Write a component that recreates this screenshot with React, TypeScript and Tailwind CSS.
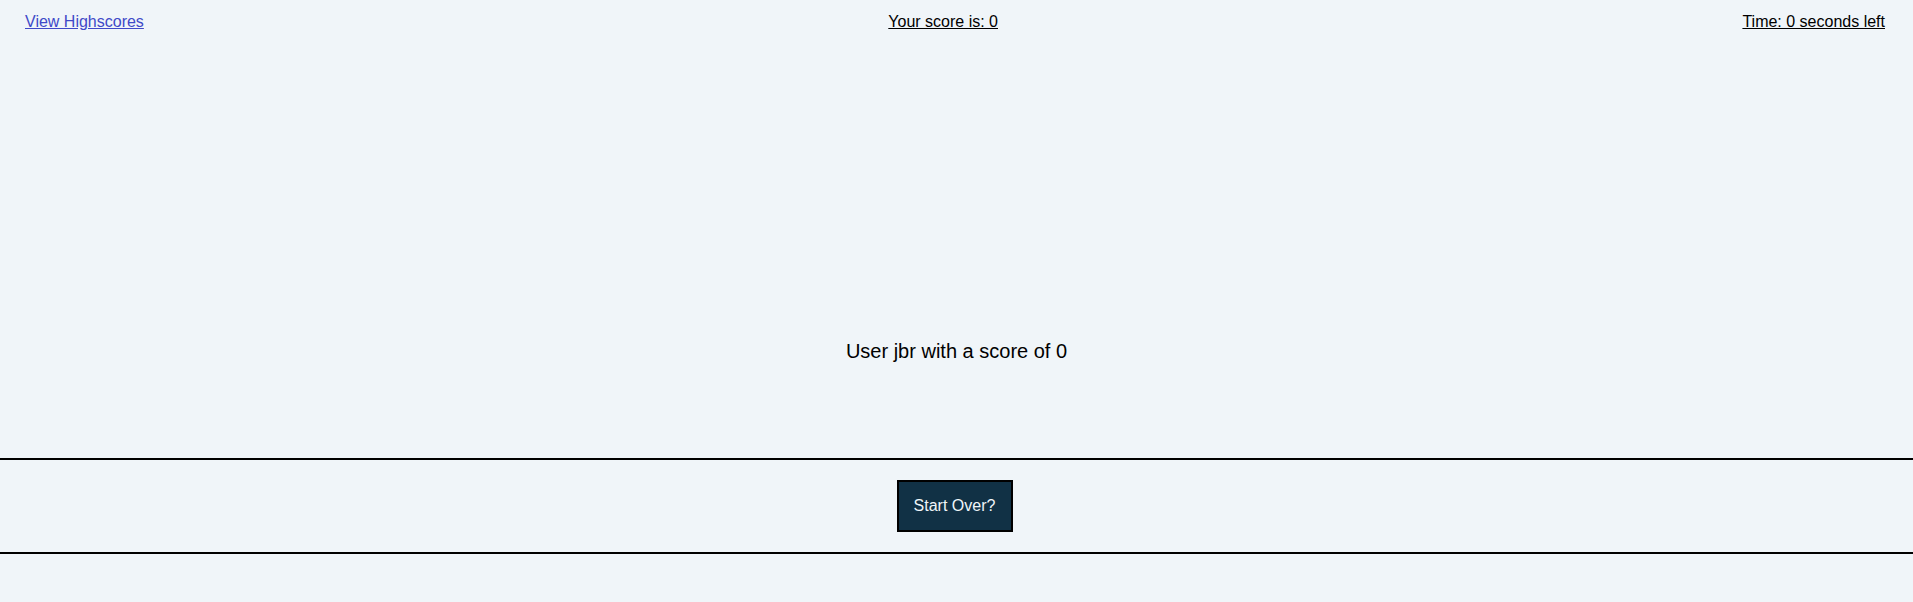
import React from "react";

export default function App() {
  return (
    <div
      className="w-full h-[602px] bg-[#f0f5f9] text-black overflow-hidden"
      style={{ fontFamily: '"Liberation Sans", Arial, sans-serif' }}
    >
      <header className="flex justify-between items-start pl-[25px] pr-7 pt-[13px] h-[31px] text-[16px] leading-[18px]">
        <a href="#" className="underline text-[#4049c8]">
          View Highscores
        </a>
        <span className="underline">Your score is: 0</span>
        <span className="underline">Time: 0 seconds left</span>
      </header>
      <main className="h-[427px] pt-[309px] text-center text-[20px] leading-[23px]">
        <p>User jbr with a score of 0</p>
      </main>
      <section className="border-t-2 border-b-2 border-black flex justify-center pr-[4px] py-[20px]">
        <button className="bg-[#113145] text-[#f0f5f9] border-2 border-black text-[16px] leading-[18px] px-[15px] py-[15px] w-[116px] h-[52px]">
          Start Over?
        </button>
      </section>
    </div>
  );
}
